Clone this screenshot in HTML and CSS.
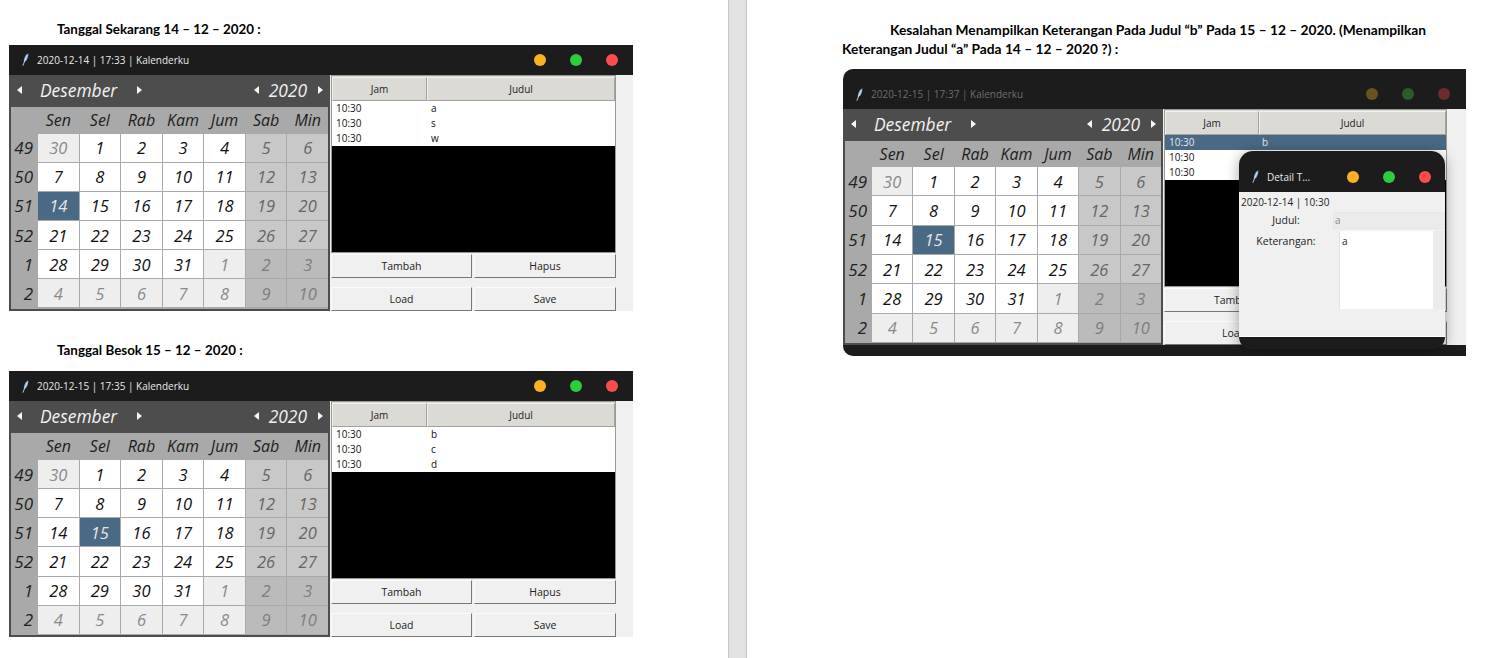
FILE: index.html
```html
<!DOCTYPE html>
<html lang="en">
<head>
    <meta charset="UTF-8">
    <title>Kalenderku</title>
    <link rel="stylesheet" href="styles.css">
</head>
<body>
<div class="doc">
    <!-- halaman kiri -->
    <div class="page page-left">
        <h4 class="note note-a">Tanggal Sekarang 14 – 12 – 2020 :</h4>
        <div class="win">
            <div class="titlebar">
                <svg class="feather" viewBox="0 0 7 13"><path d="M6.300 .3C3.200 1.800 1.600 5.500 1.800 9.300L4.500 7.500C5.800 5.500 6.500 3 6.300 .3Z" fill="#7fa9dc"/><path d="M5.300 2L.8 12.700" stroke="#e8f0fa" stroke-width=".8"/></svg>
                <span class="title">2020-12-14 | 17:33 | Kalenderku</span>
                <span class="lights"><i class="light yellow"></i><i class="light green"></i><i class="light red"></i></span>
            </div>
            <div class="win-body">
                <div class="cal">
                    <div class="cal-head">
                        <i class="arr arr-l"></i><span class="month">Desember</span><i class="arr arr-r arr-m"></i>
                        <i class="arr arr-l arr-y"></i><span class="year">2020</span><i class="arr arr-r"></i>
                    </div>
                    <div class="cal-grid">
                        <span class="dow"></span><span class="dow">Sen</span><span class="dow">Sel</span><span class="dow">Rab</span><span class="dow">Kam</span><span class="dow">Jum</span><span class="dow">Sab</span><span class="dow">Min</span>
                        <span class="wk">49</span><span class="d off">30</span><span class="d">1</span><span class="d">2</span><span class="d">3</span><span class="d">4</span><span class="d we">5</span><span class="d we">6</span>
                        <span class="wk">50</span><span class="d">7</span><span class="d">8</span><span class="d">9</span><span class="d">10</span><span class="d">11</span><span class="d we">12</span><span class="d we">13</span>
                        <span class="wk">51</span><span class="d sel">14</span><span class="d">15</span><span class="d">16</span><span class="d">17</span><span class="d">18</span><span class="d we">19</span><span class="d we">20</span>
                        <span class="wk">52</span><span class="d">21</span><span class="d">22</span><span class="d">23</span><span class="d">24</span><span class="d">25</span><span class="d we">26</span><span class="d we">27</span>
                        <span class="wk">1</span><span class="d">28</span><span class="d">29</span><span class="d">30</span><span class="d">31</span><span class="d off">1</span><span class="d weoff">2</span><span class="d weoff">3</span>
                        <span class="wk">2</span><span class="d off">4</span><span class="d off">5</span><span class="d off">6</span><span class="d off">7</span><span class="d off">8</span><span class="d weoff">9</span><span class="d weoff">10</span>
                    </div>
                </div>
                <div class="pane">
                    <div class="tree">
                        <div class="tree-head"><span class="th th-jam">Jam</span><span class="th th-judul">Judul</span></div>
                        <div class="row"><span class="c-jam">10:30</span><span>a</span></div>
                        <div class="row"><span class="c-jam">10:30</span><span>s</span></div>
                        <div class="row"><span class="c-jam">10:30</span><span>w</span></div>
                    </div>
                    <div class="btns">
                        <span class="btn">Tambah</span><span class="btn">Hapus</span>
                        <span class="btn">Load</span><span class="btn">Save</span>
                    </div>
                </div>
            </div>
        </div>

        <h4 class="note note-b">Tanggal Besok 15 – 12 – 2020 :</h4>
        <div class="win">
            <div class="titlebar">
                <svg class="feather" viewBox="0 0 7 13"><path d="M6.300 .3C3.200 1.800 1.600 5.500 1.800 9.300L4.500 7.500C5.800 5.500 6.500 3 6.300 .3Z" fill="#7fa9dc"/><path d="M5.300 2L.8 12.700" stroke="#e8f0fa" stroke-width=".8"/></svg>
                <span class="title">2020-12-15 | 17:35 | Kalenderku</span>
                <span class="lights"><i class="light yellow"></i><i class="light green"></i><i class="light red"></i></span>
            </div>
            <div class="win-body">
                <div class="cal">
                    <div class="cal-head">
                        <i class="arr arr-l"></i><span class="month">Desember</span><i class="arr arr-r arr-m"></i>
                        <i class="arr arr-l arr-y"></i><span class="year">2020</span><i class="arr arr-r"></i>
                    </div>
                    <div class="cal-grid">
                        <span class="dow"></span><span class="dow">Sen</span><span class="dow">Sel</span><span class="dow">Rab</span><span class="dow">Kam</span><span class="dow">Jum</span><span class="dow">Sab</span><span class="dow">Min</span>
                        <span class="wk">49</span><span class="d off">30</span><span class="d">1</span><span class="d">2</span><span class="d">3</span><span class="d">4</span><span class="d we">5</span><span class="d we">6</span>
                        <span class="wk">50</span><span class="d">7</span><span class="d">8</span><span class="d">9</span><span class="d">10</span><span class="d">11</span><span class="d we">12</span><span class="d we">13</span>
                        <span class="wk">51</span><span class="d">14</span><span class="d sel">15</span><span class="d">16</span><span class="d">17</span><span class="d">18</span><span class="d we">19</span><span class="d we">20</span>
                        <span class="wk">52</span><span class="d">21</span><span class="d">22</span><span class="d">23</span><span class="d">24</span><span class="d">25</span><span class="d we">26</span><span class="d we">27</span>
                        <span class="wk">1</span><span class="d">28</span><span class="d">29</span><span class="d">30</span><span class="d">31</span><span class="d off">1</span><span class="d weoff">2</span><span class="d weoff">3</span>
                        <span class="wk">2</span><span class="d off">4</span><span class="d off">5</span><span class="d off">6</span><span class="d off">7</span><span class="d off">8</span><span class="d weoff">9</span><span class="d weoff">10</span>
                    </div>
                </div>
                <div class="pane">
                    <div class="tree">
                        <div class="tree-head"><span class="th th-jam">Jam</span><span class="th th-judul">Judul</span></div>
                        <div class="row"><span class="c-jam">10:30</span><span>b</span></div>
                        <div class="row"><span class="c-jam">10:30</span><span>c</span></div>
                        <div class="row"><span class="c-jam">10:30</span><span>d</span></div>
                    </div>
                    <div class="btns">
                        <span class="btn">Tambah</span><span class="btn">Hapus</span>
                        <span class="btn">Load</span><span class="btn">Save</span>
                    </div>
                </div>
            </div>
        </div>
    </div>

    <div class="gutter"></div>

    <!-- halaman kanan -->
    <div class="page page-right">
        <h4 class="note note-c">Kesalahan Menampilkan Keterangan Pada Judul “b” Pada 15 – 12 – 2020. (Menampilkan<br>Keterangan Judul “a” Pada 14 – 12 – 2020 ?) :</h4>
        <div class="win win-big">
            <div class="titlebar">
                <svg class="feather" viewBox="0 0 7 13"><path d="M6.300 .3C3.200 1.800 1.600 5.500 1.800 9.300L4.500 7.500C5.800 5.500 6.500 3 6.300 .3Z" fill="#7fa9dc"/><path d="M5.300 2L.8 12.700" stroke="#e8f0fa" stroke-width=".8"/></svg>
                <span class="title">2020-12-15 | 17:37 | Kalenderku</span>
                <span class="lights"><i class="light yellow"></i><i class="light green"></i><i class="light red"></i></span>
            </div>
            <div class="win-body">
                <div class="cal">
                    <div class="cal-head">
                        <i class="arr arr-l"></i><span class="month">Desember</span><i class="arr arr-r arr-m"></i>
                        <i class="arr arr-l arr-y"></i><span class="year">2020</span><i class="arr arr-r"></i>
                    </div>
                    <div class="cal-grid">
                        <span class="dow"></span><span class="dow">Sen</span><span class="dow">Sel</span><span class="dow">Rab</span><span class="dow">Kam</span><span class="dow">Jum</span><span class="dow">Sab</span><span class="dow">Min</span>
                        <span class="wk">49</span><span class="d off">30</span><span class="d">1</span><span class="d">2</span><span class="d">3</span><span class="d">4</span><span class="d we">5</span><span class="d we">6</span>
                        <span class="wk">50</span><span class="d">7</span><span class="d">8</span><span class="d">9</span><span class="d">10</span><span class="d">11</span><span class="d we">12</span><span class="d we">13</span>
                        <span class="wk">51</span><span class="d">14</span><span class="d sel">15</span><span class="d">16</span><span class="d">17</span><span class="d">18</span><span class="d we">19</span><span class="d we">20</span>
                        <span class="wk">52</span><span class="d">21</span><span class="d">22</span><span class="d">23</span><span class="d">24</span><span class="d">25</span><span class="d we">26</span><span class="d we">27</span>
                        <span class="wk">1</span><span class="d">28</span><span class="d">29</span><span class="d">30</span><span class="d">31</span><span class="d off">1</span><span class="d weoff">2</span><span class="d weoff">3</span>
                        <span class="wk">2</span><span class="d off">4</span><span class="d off">5</span><span class="d off">6</span><span class="d off">7</span><span class="d off">8</span><span class="d weoff">9</span><span class="d weoff">10</span>
                    </div>
                </div>
                <div class="pane">
                    <div class="tree">
                        <div class="tree-head"><span class="th th-jam">Jam</span><span class="th th-judul">Judul</span></div>
                        <div class="row row-sel"><span class="c-jam">10:30</span><span>b</span></div>
                        <div class="row"><span class="c-jam">10:30</span><span>c</span></div>
                        <div class="row"><span class="c-jam">10:30</span><span>d</span></div>
                    </div>
                    <div class="btns">
                        <span class="btn">Tambah</span><span class="btn">Hapus</span>
                        <span class="btn">Load</span><span class="btn">Save</span>
                    </div>
                </div>
            </div>
            <div class="win-foot"></div>

            <!-- popup detail -->
            <div class="popup">
                <div class="popup-bar">
                    <svg class="feather" viewBox="0 0 7 13"><path d="M6.300 .3C3.200 1.800 1.600 5.500 1.800 9.300L4.500 7.500C5.800 5.500 6.500 3 6.300 .3Z" fill="#7fa9dc"/><path d="M5.300 2L.8 12.700" stroke="#e8f0fa" stroke-width=".8"/></svg>
                    <span class="title">Detail T...</span>
                    <span class="lights"><i class="light yellow"></i><i class="light green"></i><i class="light red"></i></span>
                </div>
                <div class="popup-body">
                    <div class="popup-date">2020-12-14 | 10:30</div>
                    <div class="form">
                        <span class="lbl">Judul:</span><span class="field">a</span>
                        <span class="lbl lbl-ket">Keterangan:</span>
                        <div class="area-wrap"><div class="area">a</div></div>
                    </div>
                </div>
                <div class="popup-foot"></div>
            </div>
        </div>
    </div>
</div>
</body>
</html>
```
FILE: styles.css
```css
*{
    margin:0;
    padding:0;
    box-sizing: border-box;
}
html,body{
    width: 100%;
    height: 100%;
    overflow: hidden;
    background: #fff;
}
body{
    font-family: "Open Sans", "Noto Sans", sans-serif;
    color: #111;
}
.doc{
    display: flex;
    height: 658px;
}
.page{
    background: #fff;
}
.page-left{
    width: 728px;
    padding-left: 9px;
}
.gutter{
    width: 19px;
    background: #e3e3e3;
    border-left: 1px solid #c6c6c6;
    border-right: 1px solid #c6c6c6;
}
.page-right{
    flex: 1;
    padding-left: 96px;
}
.note{
    font-family: Lato, "Liberation Sans", sans-serif;
    font-size: 13.400px;
    font-weight: 700;
    line-height: 19.500px;
    color: #000;
}
.note-a{
    padding: 20px 0 5px 48px;
}
.note-b{
    padding: 30px 0 11px 48px;
}
.note-c{
    margin-left: -1px;
    padding-top: 19.500px;
    height: 69px;
    font-size: 13.750px;
    text-indent: 48px;
}

/* 窗口 */
.win{
    width: 624px;
    position: relative;
    background: #f0f0f0;
}
.titlebar{
    display: flex;
    align-items: center;
    height: 30px;
    padding-left: 13px;
    background: #1c1c1c;
}
.feather{
    width: 7px;
    height: 13px;
    flex: none;
}
.title{
    margin-left: 8px;
    font-size: 10px;
    color: #e9e9e9;
    white-space: nowrap;
}
.lights{
    display: flex;
    gap: 24px;
    margin-left: auto;
    padding-right: 15px;
}
.light{
    display: block;
    width: 12px;
    height: 12px;
    border-radius: 50%;
}
.yellow{ background: #fdb122; }
.green{ background: #2ecb3f; }
.red{ background: #fc4c4e; }
.win-body{
    display: flex;
    height: 236px;
}

/* 日历 */
.cal{
    width: 321px;
    flex: none;
    padding: 0 2px 2px;
    background: #4d4d4d;
}
.cal-head{
    display: flex;
    align-items: center;
    height: 32px;
    padding: 0 5px 2px 6px;
    font-style: italic;
    font-size: 17.400px;
    color: #f2f2f2;
}
.arr{
    display: block;
    width: 0;
    height: 0;
    border-top: 4.500px solid transparent;
    border-bottom: 4.500px solid transparent;
}
.arr-l{
    border-right: 5px solid #f5f5f5;
}
.arr-r{
    border-left: 5px solid #f5f5f5;
}
.month{
    margin-left: 18px;
}
.arr-m{
    margin-left: 20px;
}
.arr-y{
    margin-left: auto;
}
.year{
    margin: 0 11px 0 10px;
}
.cal-grid{
    display: grid;
    grid-template-columns: 26px repeat(7,1fr);
    grid-template-rows: 26px repeat(6,1fr);
    gap: 1px;
    height: 202px;
    padding-bottom: 1px;
    background: #a9a9a9;
    font-style: italic;
    font-size: 16.500px;
    color: #111;
}
.dow,.d,.wk{
    display: flex;
    align-items: center;
    justify-content: center;
}
.dow{
    font-size: 16px;
    color: #1e1e1e;
}
.wk{
    justify-content: flex-end;
    padding-right: 4px;
    font-size: 17px;
    color: #222;
}
.d{
    background: #fff;
}
.off{
    background: #eeeeee;
    color: #8a8a8a;
}
.we{
    background: #c8c8c8;
    color: #666;
}
.weoff{
    background: #bbbbbb;
    color: #7e7e7e;
}
.sel{
    background: #4a6984;
    color: #e6e6e6;
}

/* 右侧列表 */
.pane{
    flex: 1;
    padding-left: 1px;
    font-size: 10px;
}
.tree{
    width: 285px;
    height: 178px;
    padding: 2px 1px 1px;
    background: #000;
    border: 1px solid #9a9a95;
}
.tree-head{
    display: flex;
    height: 25px;
    margin: -2px -1px 0;
    padding: 1px 0 0;
    background: #dcdad5;
}
.th{
    display: flex;
    align-items: center;
    justify-content: center;
    background: #dcdad5;
    border: 1px solid #f1f0ec;
    border-right-color: #a3a19b;
    border-bottom-color: #a3a19b;
    color: #222;
}
.th-jam{
    width: 95px;
}
.th-judul{
    flex: 1;
}
.row{
    display: flex;
    height: 15px;
    margin: 0 -1px;
    padding-left: 4px;
    background: #fff;
    line-height: 15px;
    color: #111;
}
.row-sel{
    background: #4a6984;
    color: #e8e8e8;
}
.c-jam{
    width: 95px;
}
.btns{
    display: grid;
    grid-template-columns: 141px 142px;
    gap: 9px 2px;
    margin-top: 1px;
}
.btn{
    display: flex;
    align-items: center;
    justify-content: center;
    height: 24px;
    background: #f0f0f0;
    border: 1px solid #fbfbfb;
    border-right-color: #777;
    border-bottom-color: #777;
    font-size: 10.500px;
    color: #222;
}

/* 第三个窗口 */
.win-big{
    width: 623px;
    border-radius: 10px 0 0 10px;
    overflow: hidden;
}
.win-big .titlebar{
    height: 40px;
    padding-top: 10px;
}
.win-big .title{
    color: #6d6d6d;
}
.win-big .lights{
    padding-right: 16px;
}
.win-big .yellow{ background: #6b5320; }
.win-big .green{ background: #2b5a2b; }
.win-big .red{ background: #6b2c30; }
.win-big .cal{
    width: 320px;
}
.win-big .cal-grid{
    grid-template-rows: 25px repeat(6,1fr);
}
.win-big .tree{
    width: 283px;
}
.win-big .th-jam{
    width: 94px;
}
.win-big .c-jam{
    width: 93px;
}
.win-big .btns{
    grid-template-columns: 140px 141px;
}
.win-foot{
    height: 11px;
    background: #1c1c1c;
}
.popup{
    position: absolute;
    left: 396px;
    top: 82px;
    width: 206px;
    border-radius: 14px 14px 12px 12px;
    box-shadow: 0 2px 14px rgba(0,0,0,.35);
    overflow: hidden;
}
.popup-bar{
    display: flex;
    align-items: center;
    height: 41px;
    padding: 10px 0 0 13px;
    background: #1c1c1c;
}
.popup-bar .title{
    margin-left: 8px;
    color: #e9e9e9;
}
.popup-bar .lights{
    padding-right: 14px;
}
.popup-bar .yellow{ background: #fdb122; }
.popup-bar .green{ background: #2ecb3f; }
.popup-bar .red{ background: #fc4c4e; }
.popup-body{
    height: 145px;
    padding-top: 1px;
    background: #f0f0f0;
    border-bottom: 1px solid #fff;
    font-size: 10px;
    color: #222;
}
.popup-date{
    height: 19px;
    padding-left: 2px;
    line-height: 18px;
}
.form{
    display: grid;
    grid-template-columns: 94px 1fr;
    grid-template-rows: 17px 1fr;
    row-gap: 2px;
}
.lbl{
    text-align: center;
    font-size: 10.500px;
    line-height: 17px;
}
.lbl-ket{
    padding-top: 2px;
}
.field{
    padding-left: 1px;
    background: #ebebeb;
    border: 1px solid #e6e6e6;
    color: #8a8a8a;
    line-height: 15px;
}
.area-wrap{
    height: 78px;
    padding-left: 6px;
    background: #f0f0f0;
}
.area{
    height: 78px;
    padding: 3px 0 0 2px;
    background: #fff;
    border-right: 12px solid #ebebeb;
    border-left: 1px solid #e2e2e2;
    line-height: 14px;
    color: #222;
}
.popup-foot{
    height: 12px;
    background: #1c1c1c;
}
```
